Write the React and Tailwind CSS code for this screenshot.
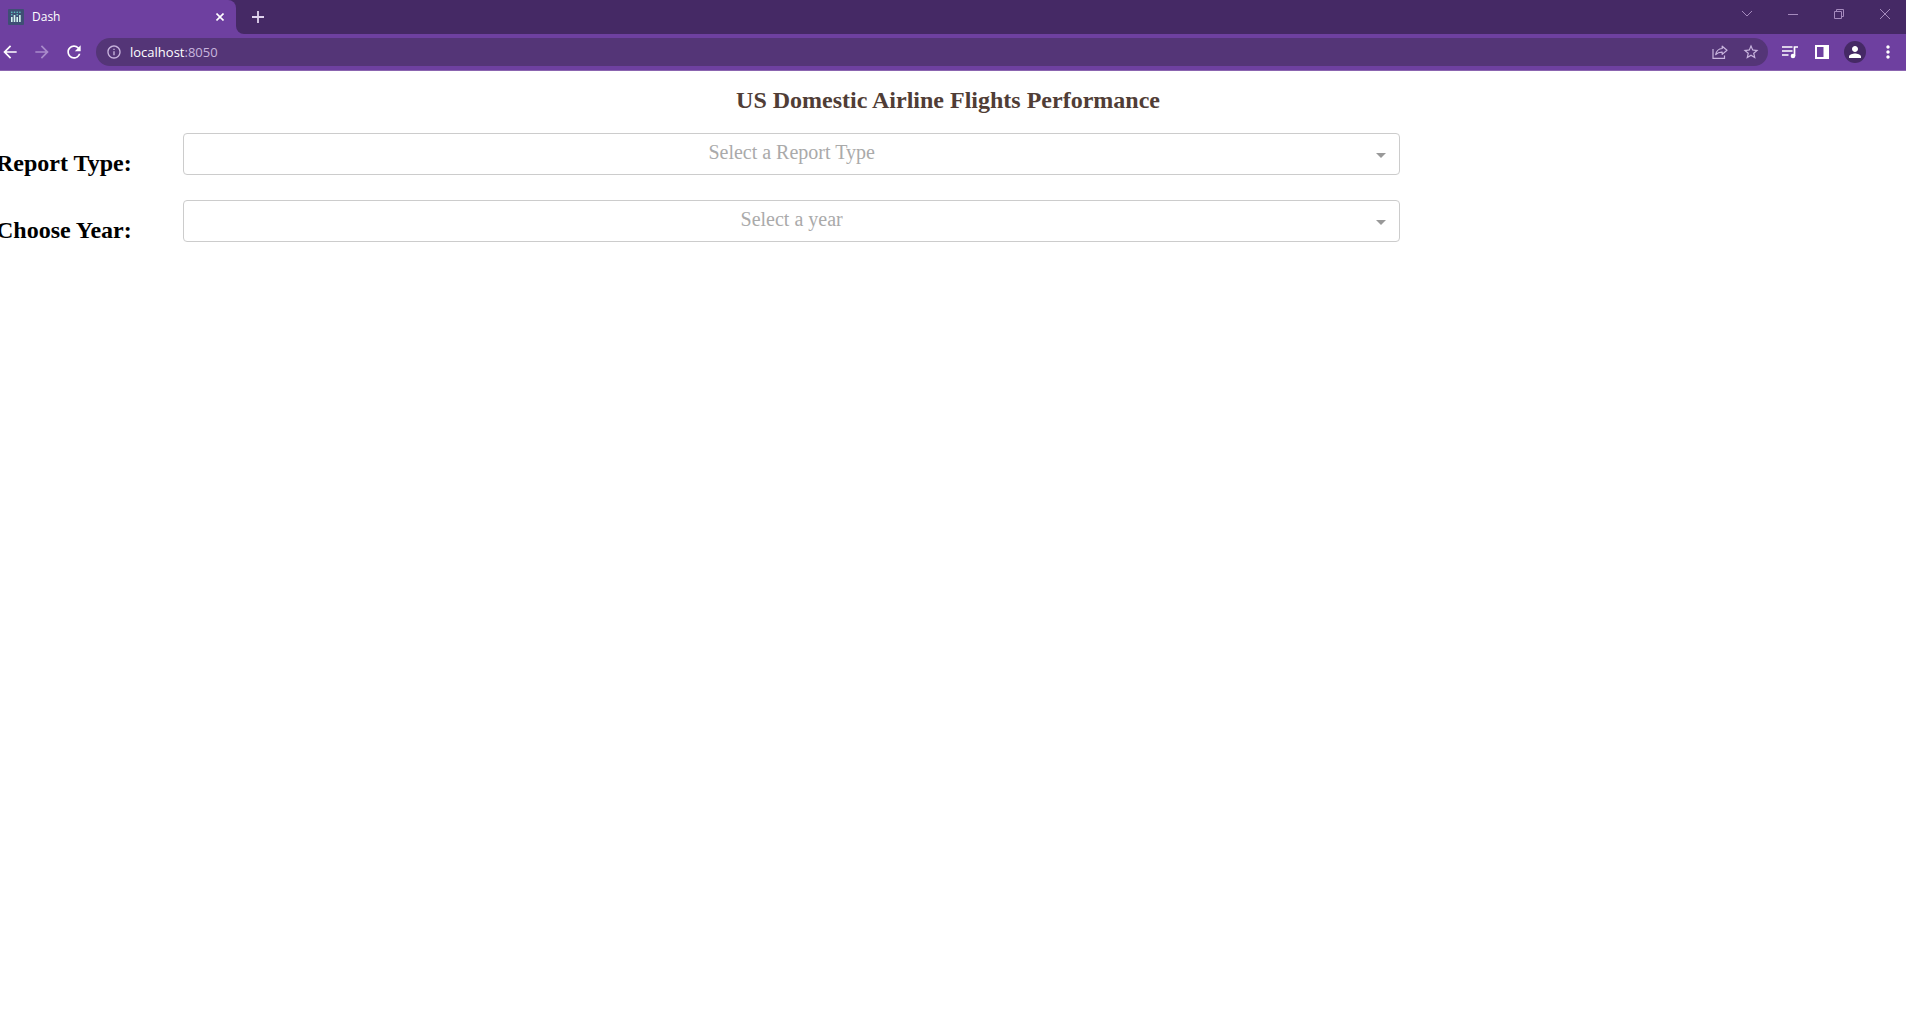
import React from "react";
import {
  MdArrowBack,
  MdArrowForward,
  MdRefresh,
  MdInfoOutline,
  MdStarBorder,
  MdMoreVert,
  MdPerson,
} from "react-icons/md";

function DashIcon() {
  return (
    <svg className="size-4 shrink-0" viewBox="0 0 16 16" aria-hidden="true">
      <rect width="16" height="16" rx="1" fill="#3f4f75" />
      <g fill="#d5f5f0">
        <rect x="3" y="8" width="1.6" height="5" />
        <rect x="5.7" y="6" width="1.6" height="7" />
        <rect x="8.4" y="8" width="1.6" height="5" />
        <rect x="11.1" y="6" width="1.6" height="7" />
      </g>
      <g fill="#62cfc8">
        <circle cx="3.8" cy="5.8" r="0.8" />
        <circle cx="3.8" cy="3.3" r="0.8" />
        <circle cx="6.5" cy="3.3" r="0.8" />
        <circle cx="9.2" cy="5.8" r="0.8" />
        <circle cx="9.2" cy="3.3" r="0.8" />
        <circle cx="11.9" cy="3.3" r="0.8" />
      </g>
    </svg>
  );
}

function ShareIcon() {
  return (
    <svg className="size-4" viewBox="0 0 16 16" fill="none" stroke="currentColor" strokeWidth="1.2" aria-hidden="true">
      <path d="M1 5v9.3h11.5v-2.8" />
      <path d="M10.2 2.2 15 6.3l-4.800 4.100V8.100C7.300 8 5.400 8.800 3.700 10.700 4.300 7.200 6.300 4.800 10.200 4.500Z" strokeLinejoin="round" />
    </svg>
  );
}

function MediaIcon() {
  return (
    <svg className="size-5" viewBox="0 0 20 20" fill="none" stroke="currentColor" strokeWidth="1.7" aria-hidden="true">
      <path d="M2 5h10.500M2 9h10.500M2 13h6.500" />
      <path d="M14.500 14V5H18" />
      <circle cx="13" cy="14" r="2.300" fill="currentColor" stroke="none" />
    </svg>
  );
}

function WindowControls() {
  const button = "flex h-7 w-[46px] items-center justify-center";
  return (
    <div className="-mr-0.5 flex text-[#a58abd]">
      <button className={button} aria-label="Search tabs">
        <svg className="h-3 w-3" viewBox="0 0 12 12" fill="none" stroke="currentColor" aria-hidden="true">
          <path d="m1 3 5 5 5-5" />
        </svg>
      </button>
      <button className={button} aria-label="Minimize">
        <svg className="h-3 w-3" viewBox="0 0 12 12" fill="none" stroke="currentColor" aria-hidden="true">
          <path d="M1 6.500h10" />
        </svg>
      </button>
      <button className={button} aria-label="Restore">
        <svg className="h-3 w-3" viewBox="0 0 12 12" fill="none" stroke="currentColor" aria-hidden="true">
          <path d="M1.500 3.500h7v7h-7zM3.500 3.500v-2h7v7h-2" />
        </svg>
      </button>
      <button className={button} aria-label="Close window">
        <svg className="h-3 w-3" viewBox="0 0 12 12" fill="none" stroke="currentColor" aria-hidden="true">
          <path d="m1 1 10 10M11 1 1 11" />
        </svg>
      </button>
    </div>
  );
}

function TabStrip() {
  return (
    <div className="flex h-[34px] overflow-hidden bg-[#452965]">
      <div className="flex w-[236px] items-center rounded-tr-lg bg-[#6e40a0] pr-2 pl-2 text-white">
        <DashIcon />
        <span className="ml-2 flex-1 text-xs">Dash</span>
        <button className="flex size-4 items-center justify-center" aria-label="Close tab">
          <svg className="size-2" viewBox="0 0 8 8" fill="none" stroke="currentColor" strokeWidth="1.6" aria-hidden="true">
            <path d="m.5.5 7 7M7.500.5l-7 7" />
          </svg>
        </button>
      </div>
      <div className="bg-[#6e40a0]">
        <div className="flex h-[34px] w-11 items-center justify-center rounded-bl-lg bg-[#452965]">
          <button className="text-[#e0d3ee]" aria-label="New tab">
            <svg className="size-3" viewBox="0 0 12 12" fill="none" stroke="currentColor" strokeWidth="1.8" aria-hidden="true">
              <path d="M6 0v12M0 6h12" />
            </svg>
          </button>
        </div>
      </div>
      <div className="flex-1" />
      <WindowControls />
    </div>
  );
}

function Toolbar() {
  return (
    <div className="flex h-[37px] items-center border-b border-[#8b65b0] bg-[#6e40a0] text-white">
      <div className="flex w-24 shrink-0 gap-3">
        <button aria-label="Back"><MdArrowBack className="size-5" /></button>
        <button className="text-[#a98bcb]" aria-label="Forward"><MdArrowForward className="size-5" /></button>
        <button aria-label="Reload"><MdRefresh className="size-5" /></button>
      </div>
      <div className="flex h-7 flex-1 items-center rounded-full bg-[#543577] pr-2 pl-2.5 text-[#c9b5de]">
        <button aria-label="View site information"><MdInfoOutline className="size-4" /></button>
        <div className="relative ml-2 flex-1 text-[13px] leading-5">
          <input
            className="w-full bg-transparent text-transparent caret-white outline-none"
            aria-label="Address"
            defaultValue=""
          />
          <span className="pointer-events-none absolute inset-0">
            <span className="text-white">localhost</span>:8050
          </span>
        </div>
        <div className="flex items-center gap-3.5">
          <button aria-label="Share this page"><ShareIcon /></button>
          <button aria-label="Bookmark this tab"><MdStarBorder className="size-[18px]" /></button>
        </div>
      </div>
      <div className="flex items-center gap-3 pr-2 pl-3">
        <button aria-label="Media controls"><MediaIcon /></button>
        <button className="flex size-5 items-center justify-center" aria-label="Side panel">
          <svg className="size-3.5" viewBox="0 0 14 14" aria-hidden="true">
            <path fill="currentColor" fillRule="evenodd" d="M0 0h14v14H0zM2 2v10h6.500V2z" />
          </svg>
        </button>
        <button className="flex size-[22px] items-center justify-center rounded-full bg-[#452965]" aria-label="Profile">
          <MdPerson className="size-[18px]" />
        </button>
        <button aria-label="Menu"><MdMoreVert className="size-5" /></button>
      </div>
    </div>
  );
}

function DropdownRow({ id, label, placeholder }) {
  return (
    <div className="flex">
      <label htmlFor={id} className="-ml-1 w-[187px] shrink-0 pt-3.5 text-2xl font-bold text-black">
        {label}
      </label>
      <div className="relative w-[64%]">
        <select
          id={id}
          defaultValue=""
          className="h-[42px] w-full appearance-none rounded-sm border border-[#ccc] bg-white px-3 pb-1 text-center text-xl text-[#aaa] [text-align-last:center]"
        >
          <option value="">{placeholder}</option>
        </select>
        <span className="pointer-events-none absolute top-5 right-3.5 border-x-5 border-t-5 border-x-transparent border-t-[#999]" />
      </div>
    </div>
  );
}

export default function App() {
  return (
    <div className="min-h-screen overflow-x-hidden bg-white">
      <header className="font-['Open_Sans',sans-serif]">
        <TabStrip />
        <Toolbar />
      </header>
      <main className="pr-1 font-['Liberation_Serif',serif]">
        <h1 className="pt-[13px] pr-1.5 pb-[17px] text-center text-2xl font-bold text-[#503d36]">
          US Domestic Airline Flights Performance
        </h1>
        <div className="flex flex-col gap-[21px]">
          <DropdownRow id="report-type" label="Report Type:" placeholder="Select a Report Type" />
          <DropdownRow id="year" label="Choose Year:" placeholder="Select a year" />
        </div>
      </main>
    </div>
  );
}
